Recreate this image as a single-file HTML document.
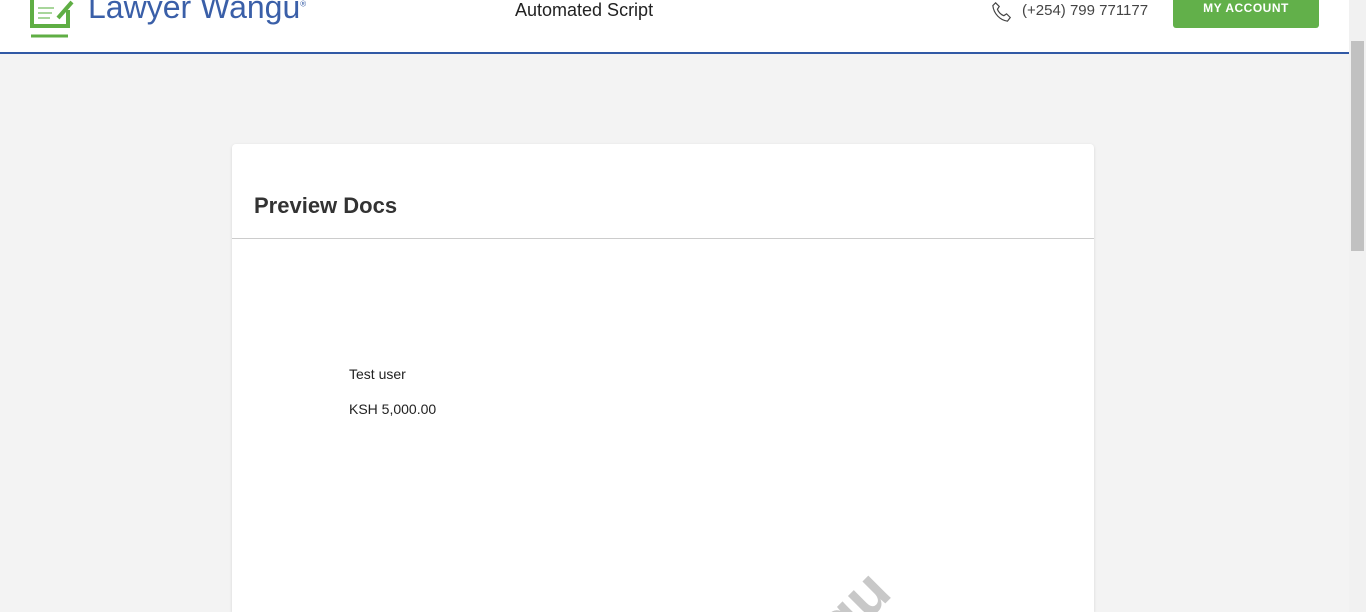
<!DOCTYPE html>
<html><head><style>
html,body{margin:0;width:1366px;height:612px;overflow:hidden}
body{background:#f3f3f3;font-family:"Liberation Sans",sans-serif;position:relative}
.hdr{position:absolute;left:0;top:0;width:1349px;height:52px;background:#fff;border-bottom:2px solid #3159a5}
.logo{position:absolute;left:88px;top:-11px;font-size:32px;color:#3a5fa8}
.title{position:absolute;left:515px;top:0;font-size:18px;color:#222}
.phone{position:absolute;left:1022px;top:2px;font-size:15px;color:#444}
.btn{position:absolute;left:1173px;top:-4px;width:146px;height:32px;background:#62b04a;border-radius:3px;color:#fff;font-weight:bold;font-size:12px;text-align:center;line-height:24px;letter-spacing:.5px}
.sb{position:absolute;right:0;top:0;width:17px;height:612px;background:#f1f1f1}
.th{position:absolute;right:2px;top:41px;width:13px;height:210px;background:#c1c1c1}
.card{position:absolute;left:232px;top:144px;width:862px;height:468px;background:#fff;border-radius:4px 4px 0 0;box-shadow:0 1px 3px rgba(0,0,0,.12);overflow:hidden}
.ch{height:94px;border-bottom:1px solid #ccc}
.ch h2{margin:0;position:absolute;left:22px;top:49px;font-size:22px;font-weight:bold;color:#333}
.t{position:absolute;left:117px;font-size:14px;color:#222;font-family:"Liberation Sans",sans-serif}
.wm{position:absolute;left:325px;top:710px;font-size:60px;font-weight:bold;color:#c8c8c8;transform:rotate(-45deg);transform-origin:left top;white-space:nowrap}
</style></head><body>
<div class="hdr">
<svg style="position:absolute;left:28px;top:0" width="50" height="40"><path d="M4 0V26H40V10" stroke="#5fae44" stroke-width="4" fill="none"/><path d="M10 8H26M10 13H24M10 18H22" stroke="#8bc97a" stroke-width="1.5"/><path d="M30 18L44 2" stroke="#5fae44" stroke-width="4"/><path d="M3 36H40" stroke="#5fae44" stroke-width="3"/></svg>
<div class="logo">Lawyer Wangu<sup style="font-size:8px">®</sup></div>
<div class="title">Automated Script</div>
<svg style="position:absolute;left:991px;top:1px" width="22" height="22" viewBox="0 0 24 24"><path d="M5 2l4 4-2 3c1 3 4 6 7 7l3-2 4 4-3 4C10 21 3 14 2 5z" fill="none" stroke="#444" stroke-width="1.3"/></svg>
<div class="phone">(+254) 799 771177</div>
<div class="btn">MY ACCOUNT</div>
</div>
<div class="sb"><div class="th"></div></div>
<div class="card"><div class="ch"><h2>Preview Docs</h2></div>
<div class="t" style="top:222px">Test user</div>
<div class="t" style="top:257px">KSH 5,000.00</div>
<div class="wm">Lawyer Wangu</div>
</div>
</body></html>
